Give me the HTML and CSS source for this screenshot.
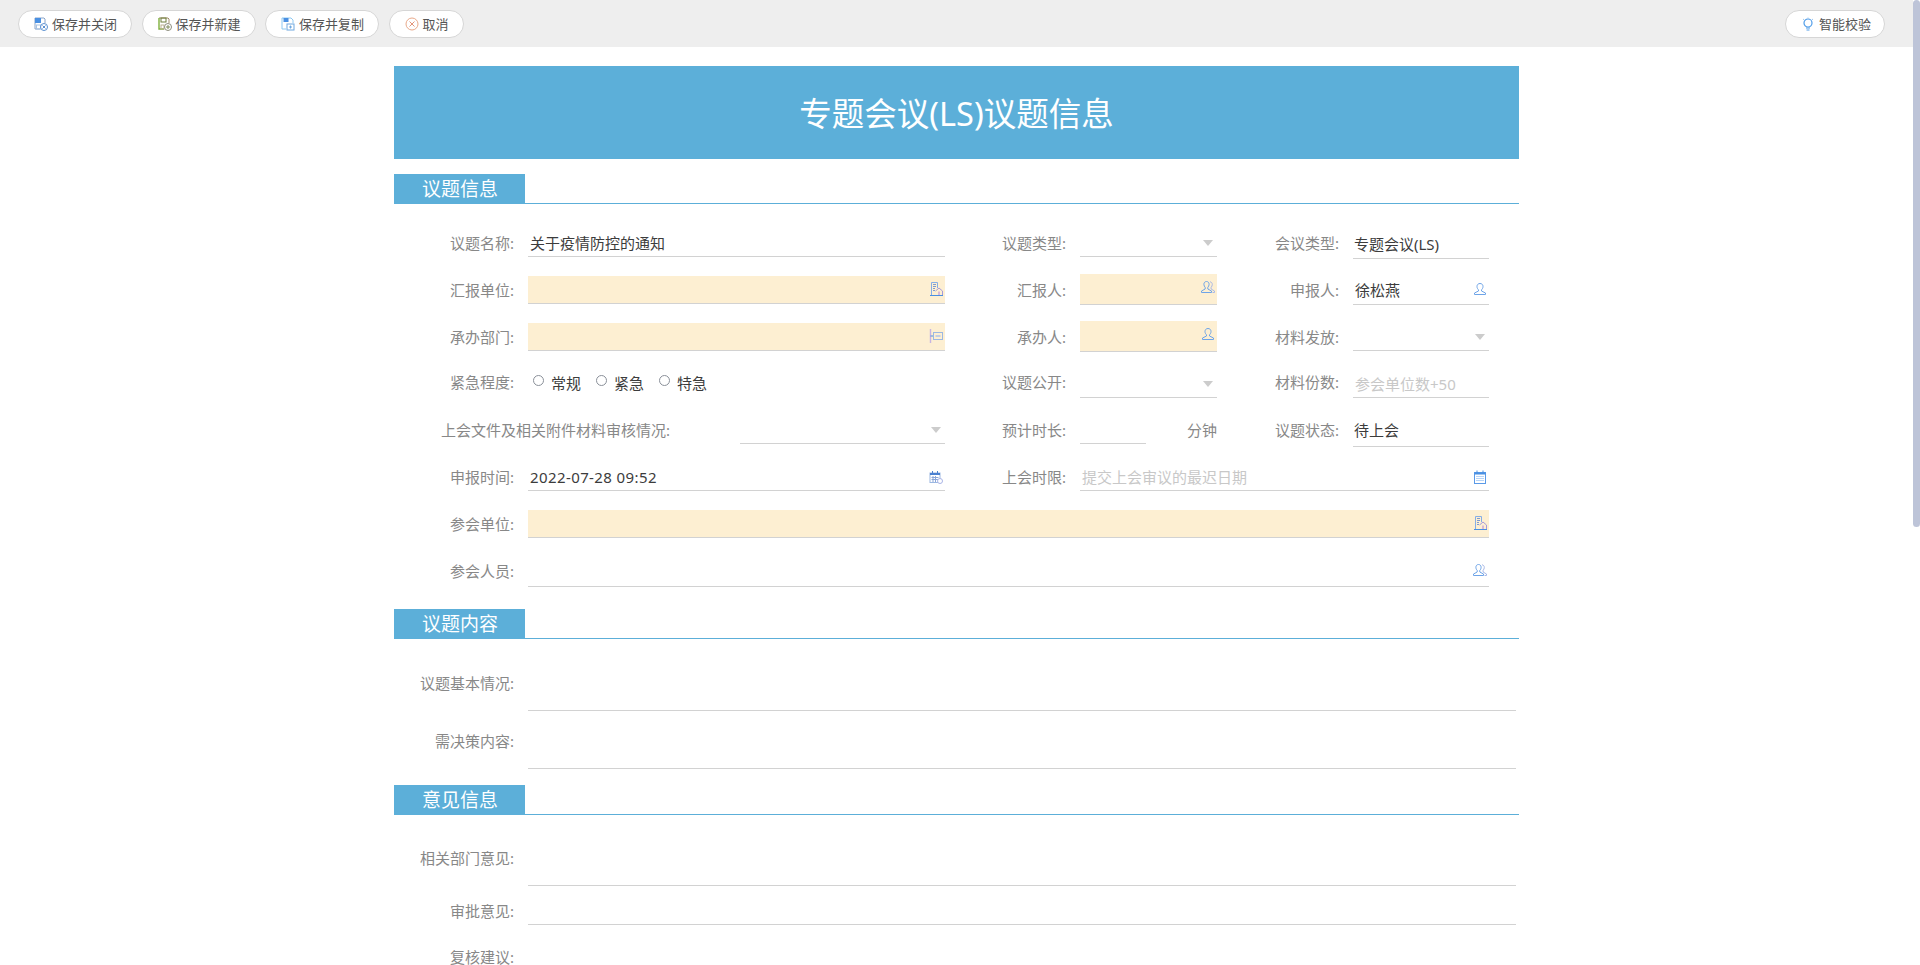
FILE: index.html
```html
<!DOCTYPE html>
<html lang="zh-CN">
<head>
    <meta charset="UTF-8">
    <meta name="viewport" content="width=device-width, initial-scale=1.0">
    <title>专题会议(LS)议题信息</title>
    <link rel="stylesheet" href="styles.css">
</head>
<body>
    <svg class="icon-defs">
        <symbol id="i-save-close" viewBox="0 0 14 14">
            <path d="M1 1h9l1 1v4M1 1v11h5" fill="none" stroke="#8aa4c8"/>
            <rect x="1" y="1" width="6" height="5" fill="#4a90e2"/>
            <rect x="2.5" y="8" width="4" height="4" fill="none" stroke="#a9c4e4"/>
            <circle cx="10" cy="10" r="3.5" fill="#fff" stroke="#5a8fd0"/>
            <path d="M8.5 8.5l3 3M11.5 8.5l-3 3" stroke="#5a8fd0"/>
        </symbol>
        <symbol id="i-save-new" viewBox="0 0 14 14">
            <path d="M1 1h9l1 1v4" fill="none" stroke="#a08c6a"/>
            <path d="M1 1v11h5" fill="none" stroke="#7fb03c" stroke-width="1.4"/>
            <rect x="3" y="1" width="5" height="4" fill="none" stroke="#6f7f3c"/>
            <rect x="3" y="8" width="3" height="4" fill="none" stroke="#b9b08f"/>
            <circle cx="10" cy="10" r="3.5" fill="#fff" stroke="#8c8c7c"/>
            <path d="M8 10h4M10 8v4" stroke="#7f8a5a"/>
        </symbol>
        <symbol id="i-save-copy" viewBox="0 0 14 14">
            <path d="M1 1h9l2 2v3M1 1v11h4" fill="none" stroke="#8cc8f2"/>
            <rect x="2.5" y="1" width="5" height="4" fill="#4a90e2"/>
            <rect x="6" y="7" width="7" height="6" fill="#fff" stroke="#6fa8e0"/>
            <path d="M9.5 8.5v3M8 10h3" stroke="#6fa8e0"/>
        </symbol>
        <symbol id="i-cancel" viewBox="0 0 14 14">
            <circle cx="7" cy="7" r="6" fill="none" stroke="#e9a98a"/>
            <path d="M4.5 4.5l5 5M9.5 4.5l-5 5" stroke="#e3967a"/>
        </symbol>
        <symbol id="i-bulb" viewBox="0 0 12 14">
            <circle cx="6" cy="6" r="4" fill="none" stroke="#4f9ce8" stroke-width="1.2"/>
            <path d="M4 11h4M4.5 13h3" stroke="#4f9ce8"/>
            <path d="M6 .5v1M1 2l1 .8M11 2l-1 .8" stroke="#9ac6f0"/>
        </symbol>
        <symbol id="i-building" viewBox="0 0 14 14">
            <path d="M2.500 13V.5h6V6" fill="none" stroke="#86aee6"/>
            <path d="M4 2.500h3M4 4.500h3M4 6.500h2M4 8.500h2" stroke="#7f9bd0"/>
            <path d="M6.500 9l3.500-3 3.500 3v4" fill="none" stroke="#a79ad8"/>
            <rect x="9" y="9.500" width="2" height="3.500" fill="#d7b9d8"/>
            <path d="M1 13.500h13" stroke="#4a90e2"/>
        </symbol>
        <symbol id="i-dept" viewBox="0 0 14 14">
            <path d="M1.500 0v14" stroke="#c7b4e2" stroke-width="1.400"/>
            <path d="M1.500 7h3" stroke="#4a90e2"/>
            <rect x="4.500" y="3.500" width="9" height="7" fill="none" stroke="#9cb8e2"/>
            <path d="M6.500 6h5v2h-5z" fill="#c3cde4"/>
        </symbol>
        <symbol id="i-user" viewBox="0 0 14 14">
            <path d="M7 1.500c-2 0-3 1.400-3 3 0 1.500.8 2.700 1.500 3.300V9L1.500 11v1.500h11V11l-4-2V7.800C9.200 7.200 10 6 10 4.500c0-1.600-1-3-3-3z" fill="none" stroke="#6ea4e8"/>
        </symbol>
        <symbol id="i-users" viewBox="0 0 14 14">
            <path d="M5.500 1.500c-1.700 0-2.600 1.300-2.600 2.800 0 1.300.6 2.500 1.300 3V9L.5 11v1.500h10V11l-3.700-2V7.300c.7-.5 1.300-1.700 1.300-3 0-1.500-.9-2.800-2.600-2.800z" fill="none" stroke="#6ea4e8"/>
            <path d="M9 1.800c1.500.2 2.300 1.300 2.300 2.600 0 1.200-.5 2.300-1.200 2.900V9l3.400 2v1.500h-2" fill="none" stroke="#a9b8e6"/>
        </symbol>
        <symbol id="i-calendar-clock" viewBox="0 0 14 14">
            <rect x="1" y="3" width="10" height="9.500" fill="#fff" stroke="#9cb8e2"/>
            <rect x="1" y="3" width="10" height="2" fill="#4a80d0"/>
            <path d="M3.500 1v3M8.500 1v3" stroke="#4a80d0"/>
            <path d="M2.500 7.500h7M2.500 9.500h7M4 6v6M6.500 6v6" stroke="#8aa6d8"/>
            <circle cx="11" cy="11" r="2.500" fill="#fff" stroke="#a9b4e6"/>
        </symbol>
        <symbol id="i-calendar" viewBox="0 0 14 14">
            <rect x="1.500" y="2.500" width="11" height="11" fill="none" stroke="#5a9ae8"/>
            <rect x="1.500" y="2.500" width="11" height="2" fill="#4a90e2"/>
            <path d="M4 .5v3M10 .5v3" stroke="#4a90e2"/>
            <path d="M3.500 6.500h7M3.500 8.500h7M3.500 10.500h7" stroke="#6fa8ee" stroke-dasharray="1 1"/>
        </symbol>
    </svg>

    <div class="app">
        <div class="main">
            <div class="toolbar">
                <button type="button" class="btn"><svg class="btn-icon"><use href="#i-save-close"/></svg>保存并关闭</button>
                <button type="button" class="btn"><svg class="btn-icon"><use href="#i-save-new"/></svg>保存并新建</button>
                <button type="button" class="btn"><svg class="btn-icon"><use href="#i-save-copy"/></svg>保存并复制</button>
                <button type="button" class="btn"><svg class="btn-icon"><use href="#i-cancel"/></svg>取消</button>
                <button type="button" class="btn btn-check"><svg class="btn-icon btn-icon-small"><use href="#i-bulb"/></svg>智能校验</button>
            </div>

            <div class="sheet">
                <h1 class="title">专题会议(LS)议题信息</h1>

                <div class="section"><span class="section-name">议题信息</span></div>
                <form class="grid grid-info">
                    <label class="label">议题名称:</label>
                    <div class="field"><span class="value">关于疫情防控的通知</span></div>
                    <label class="label">议题类型:</label>
                    <div class="field"><span></span><i class="arrow"></i></div>
                    <label class="label">会议类型:</label>
                    <div class="field drop-2"><span class="value">专题会议(LS)</span></div>

                    <label class="label">汇报单位:</label>
                    <div class="field required"><span></span><svg class="icon"><use href="#i-building"/></svg></div>
                    <label class="label">汇报人:</label>
                    <div class="field required tall drop-1"><span></span><svg class="icon"><use href="#i-users"/></svg></div>
                    <label class="label">申报人:</label>
                    <div class="field drop-1"><span class="value">徐松燕</span><svg class="icon"><use href="#i-user"/></svg></div>

                    <label class="label">承办部门:</label>
                    <div class="field required"><span></span><svg class="icon"><use href="#i-dept"/></svg></div>
                    <label class="label">承办人:</label>
                    <div class="field required tall drop-1"><span></span><svg class="icon"><use href="#i-user"/></svg></div>
                    <label class="label">材料发放:</label>
                    <div class="field"><span></span><i class="arrow"></i></div>

                    <label class="label label-high">紧急程度:</label>
                    <div class="radios">
                        <label class="radio"><input type="radio" name="level">常规</label>
                        <label class="radio"><input type="radio" name="level">紧急</label>
                        <label class="radio"><input type="radio" name="level">特急</label>
                    </div>
                    <label class="label label-high">议题公开:</label>
                    <div class="field"><span></span><i class="arrow"></i></div>
                    <label class="label label-high">材料份数:</label>
                    <div class="field"><span class="hint">参会单位数+50</span></div>

                    <div class="review">
                        <label class="label review-label">上会文件及相关附件材料审核情况:</label>
                        <div class="field review-field"><span></span><i class="arrow"></i></div>
                    </div>
                    <label class="label">预计时长:</label>
                    <div class="duration">
                        <div class="field duration-field"></div>
                        <span class="unit">分钟</span>
                    </div>
                    <label class="label">议题状态:</label>
                    <div class="field drop-3"><span class="value">待上会</span></div>

                    <label class="label">申报时间:</label>
                    <div class="field"><span class="value value-date">2022-07-28 09:52</span><svg class="icon"><use href="#i-calendar-clock"/></svg></div>
                    <label class="label">上会时限:</label>
                    <div class="field span-3"><span class="hint">提交上会审议的最迟日期</span><svg class="icon"><use href="#i-calendar"/></svg></div>

                    <label class="label">参会单位:</label>
                    <div class="field required span-5"><span></span><svg class="icon"><use href="#i-building"/></svg></div>

                    <label class="label label-high">参会人员:</label>
                    <div class="field lift span-5"><span></span><svg class="icon"><use href="#i-users"/></svg></div>
                </form>

                <div class="section section-next"><span class="section-name">议题内容</span></div>
                <div class="grid grid-content">
                    <label class="label label-wide">议题基本情况:</label>
                    <div class="field area span-wide"></div>
                    <label class="label label-wide">需决策内容:</label>
                    <div class="field area span-wide"></div>
                </div>

                <div class="section section-last"><span class="section-name">意见信息</span></div>
                <div class="grid grid-opinion">
                    <label class="label label-wide">相关部门意见:</label>
                    <div class="field area span-wide"></div>
                    <label class="label">审批意见:</label>
                    <div class="field span-wide"></div>
                    <label class="label label-last">复核建议:</label>
                </div>
            </div>
        </div>

        <div class="scrollbar"><div class="scrollbar-thumb"></div></div>
    </div>
</body>
</html>
```

FILE: styles.css
```css
html, body {
    margin: 0;
    padding: 0;
    height: 965px;
    overflow: hidden;
    background-color: #fff;
}
body {
    font-family: "Noto Sans", "Noto Sans CJK SC", sans-serif;
    font-size: 15px;
    color: #3c3c3c;
}
.icon-defs {
    display: none;
}
.app {
    display: flex;
    height: 965px;
}
.main {
    flex: 1;
    min-width: 0;
    overflow: hidden;
}
.scrollbar {
    width: 7px;
}
.scrollbar-thumb {
    height: 527px;
    background-color: #bdc4d8;
    border-radius: 4px;
}

/* toolbar */
.toolbar {
    display: flex;
    align-items: center;
    gap: 9.5px;
    height: 47px;
    padding: 0 28px 0 18px;
    background-color: #eee;
}
.btn {
    display: flex;
    align-items: center;
    gap: 4px;
    height: 28px;
    padding: 0 14px 0 15px;
    border: 1px solid #d6d6d6;
    border-radius: 14px;
    background-color: #fff;
    font-family: inherit;
    font-size: 13px;
    line-height: 26px;
    color: #555;
}
.btn-icon {
    width: 14px;
    height: 14px;
}
.btn-icon-small {
    width: 12px;
}
.btn-check {
    margin-left: auto;
    padding: 0 13px 0 16px;
    gap: 5px;
}

/* sheet */
.sheet {
    width: 1125px;
    margin: 0 auto;
}
.title {
    height: 93px;
    margin: 19px 0 0;
    background-color: #5cafd9;
    color: #fff;
    font-size: 32.5px;
    font-weight: 400;
    line-height: 96px;
    text-align: center;
}
.section {
    height: 29px;
    margin-top: 15px;
    border-bottom: 1px solid #5cafd9;
}
.section-next {
    margin-top: 22px;
}
.section-last {
    margin-top: 16px;
}
.section-name {
    display: block;
    box-sizing: border-box;
    width: 131px;
    height: 30px;
    padding-left: 28px;
    background-color: #5cafd9;
    color: #fff;
    font-size: 19px;
    line-height: 30px;
}

/* form grid */
.grid {
    display: grid;
    grid-template-columns: 134px 417px 135px 137px 136px 136px;
    align-items: end;
}
.grid-info {
    grid-template-rows: 53px 47px 47px 47px 46px 47px 47px 49px;
}
.grid-content {
    grid-template-rows: 72px 58px;
}
.grid-opinion {
    grid-template-rows: 71px 39px 40px;
}
.label {
    padding: 0 14px 1px 0;
    color: #888;
    line-height: 26px;
    text-align: right;
    white-space: nowrap;
}
.label-high {
    line-height: 30px;
}
.label-wide {
    line-height: 54px;
}
.label-last {
    padding-bottom: 0;
    line-height: 16px;
}
.field {
    box-sizing: border-box;
    display: flex;
    align-items: center;
    justify-content: space-between;
    height: 26px;
    padding: 0 2px 2px;
    border-bottom: 1px solid #d2d2d2;
}
.required {
    height: 28px;
    background-color: #fdefd2;
}
.tall {
    height: 31px;
}
.area {
    height: 54px;
}
.lift {
    padding-bottom: 7px;
}
.drop-1 {
    margin-bottom: -1px;
    padding-bottom: 5px;
}
.drop-2 {
    margin-bottom: -2px;
    padding: 0 1px 5px;
}
.drop-3 {
    margin-bottom: -3px;
    padding: 0 1px 8px;
}
.span-3 {
    grid-column: span 3;
}
.span-5 {
    grid-column: span 5;
}
.span-wide {
    grid-column: span 5;
    margin-right: -27px;
}
.value {
    white-space: nowrap;
}
.value-date {
    letter-spacing: 0.4px;
}
.hint {
    color: #c8c8c8;
    white-space: nowrap;
}
.icon {
    flex: none;
    width: 14px;
    height: 14px;
}
.arrow {
    width: 0;
    height: 0;
    margin: 1px 2px 0 0;
    border-top: 6px solid #ccc;
    border-left: 5px solid transparent;
    border-right: 5px solid transparent;
}

/* radios */
.radios {
    display: flex;
    gap: 15px;
    padding: 0 0 0 5px;
    margin-bottom: 2px;
}
.radio {
    display: flex;
    align-items: center;
    gap: 7px;
    line-height: 26px;
    white-space: nowrap;
}
.radio input {
    appearance: none;
    box-sizing: border-box;
    flex: none;
    width: 11px;
    height: 11px;
    margin: 0 0 5px;
    border: 1px solid #8a9099;
    border-radius: 50%;
    background-color: #fff;
}

/* review row and duration row */
.review {
    display: flex;
    grid-column: span 2;
    align-items: flex-end;
    justify-content: space-between;
}
.review-label {
    padding-left: 47px;
}
.review-field {
    width: 205px;
}
.duration {
    display: flex;
    align-items: flex-end;
    justify-content: space-between;
}
.duration-field {
    width: 66px;
}
.unit {
    padding-bottom: 1px;
    color: #888;
    line-height: 26px;
}
```
